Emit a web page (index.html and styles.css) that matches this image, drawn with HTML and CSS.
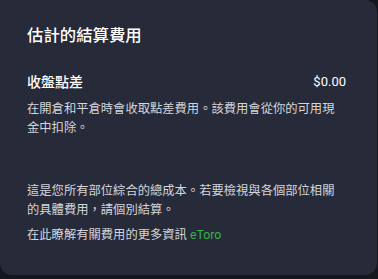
FILE: index.html
```html
<!DOCTYPE html>
<html lang="zh-Hant">
<head>
    <meta charset="UTF-8">
    <meta name="viewport" content="width=device-width, initial-scale=1.0">
    <title>估計的結算費用</title>
    <link rel="stylesheet" href="styles.css">
</head>
<body>
    <div class="sheet">
        <h2 class="sheet-title">估計的結算費用</h2>
        <div class="fee-row">
            <span class="fee-name">收盤點差</span>
            <span class="fee-value">$0.00</span>
        </div>
        <p class="note">在開倉和平倉時會收取點差費用。該費用會從你的可用現金中扣除。</p>
        <p class="note total">這是您所有部位綜合的總成本。若要檢視與各個部位相關的具體費用，請個別結算。</p>
        <p class="note more">在此瞭解有關費用的更多資訊 <a class="link" href="#">eToro</a></p>
    </div>
</body>
</html>
```

FILE: styles.css
```css
:root {
    --outer: #15171e;
    --card: #272a38;
    --title: #ffffff;
    --text: #d4d6dc;
    --green: #35b44a;
}

* {
    margin: 0;
    padding: 0;
    box-sizing: border-box;
}

body {
    background: var(--outer);
    font-family: Roboto, "Noto Sans CJK TC", sans-serif;
    color: var(--text);
    width: 378px;
    height: 279px;
    overflow: hidden;
}

.sheet {
    width: 377px;
    background: var(--card);
    border-radius: 0 12px 12px 12px;
    padding: 25px 31px 30px 27px;
}

.sheet-title {
    font-size: 16.4px;
    font-weight: 500;
    line-height: 22px;
    color: var(--title);
}

.fee-row {
    display: flex;
    justify-content: space-between;
    align-items: center;
    margin-top: 25px;
    line-height: 20px;
}

.fee-name {
    font-size: 14px;
    font-weight: 500;
    color: var(--title);
}

.fee-value {
    font-size: 13px;
    color: var(--title);
}

.note {
    font-size: 12.3px;
    line-height: 19px;
    margin-top: 6px;
}

.fee-row + .note {
    margin-top: 8px;
}

.note.total {
    margin-top: 44px;
}

.link {
    color: var(--green);
    text-decoration: none;
}
```
